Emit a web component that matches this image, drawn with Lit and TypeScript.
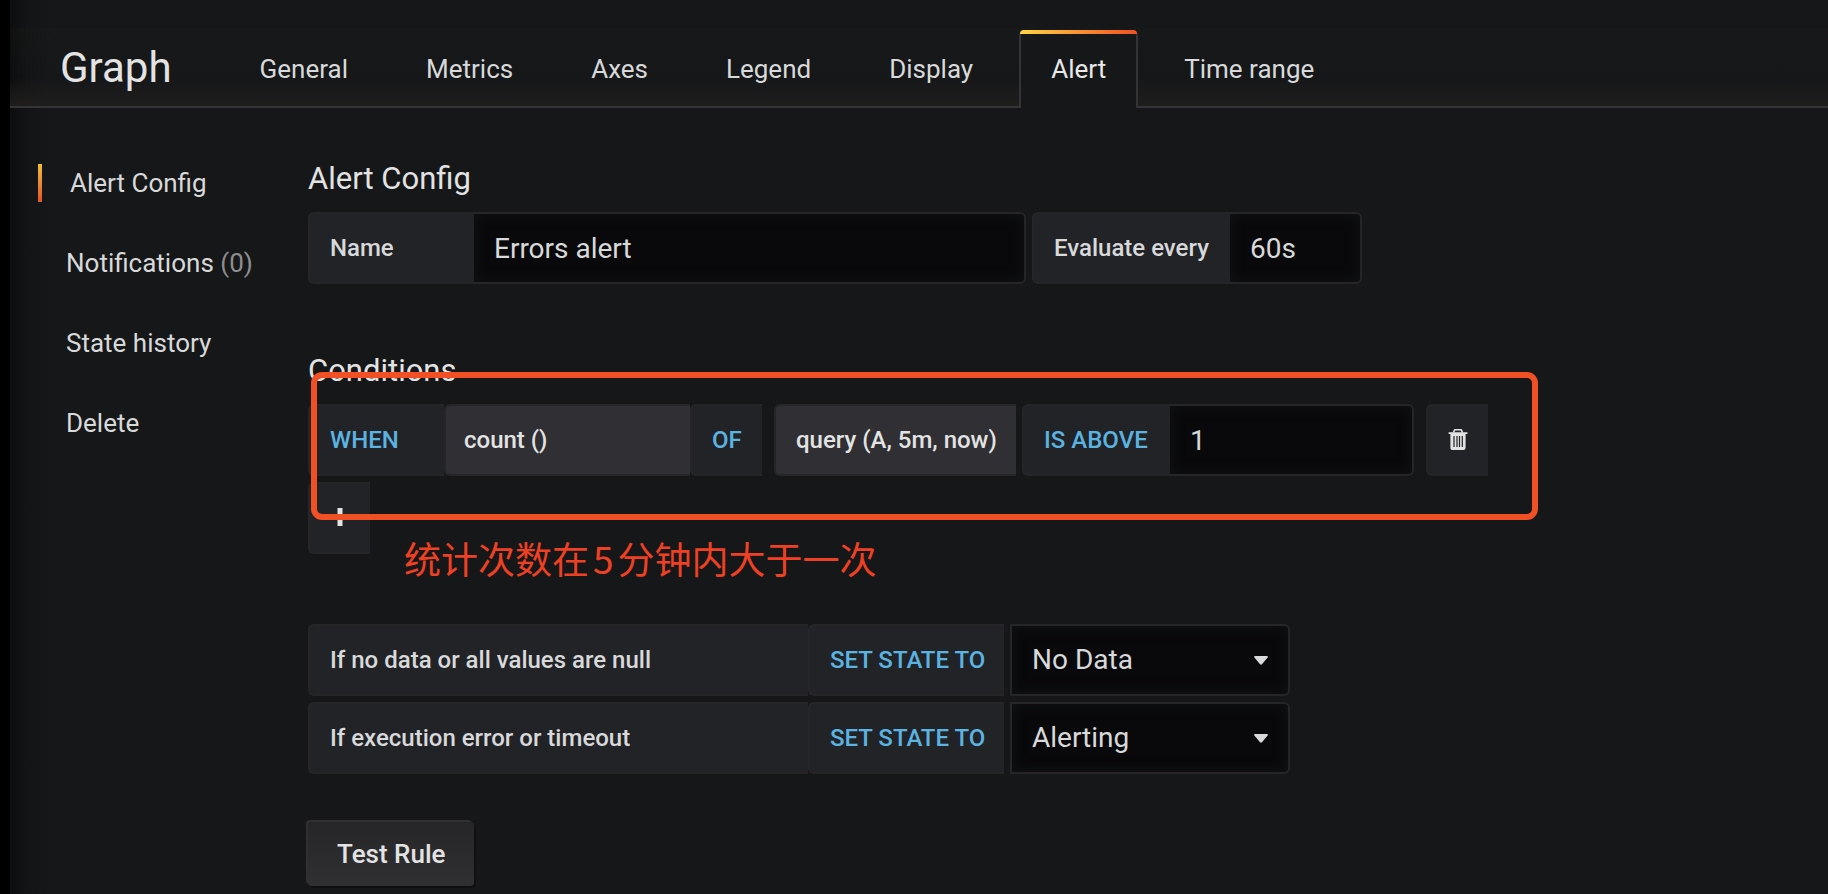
import { LitElement, html, css, svg } from "lit";
import { customElement, property, state } from "lit/decorators.js";
import { classMap } from "lit/directives/class-map.js";

interface StateRule {
  id: string;
  label: string;
  value: string;
  options: string[];
}

const STATES = ["Alerting", "No Data", "Keep Last State", "Ok"];

@customElement("editor-tabs")
class EditorTabs extends LitElement {
  @property() heading = "";
  @property({ type: Array }) tabs: string[] = [];
  @state() active = "Alert";

  static styles = css`
    :host {
      display: block;
    }
    .header {
      display: flex;
      align-items: stretch;
      margin-top: 28px;
      padding: 2px 0 0 50px;
      border-bottom: 2px solid #333435;
      background: linear-gradient(180deg, rgba(34, 32, 30, 0.15), rgba(22, 23, 25, 0) 50px, #1f1e1d);
    }
    .title {
      margin: 0 56px 0 0;
      font-size: 42px;
      font-weight: 400;
      line-height: 76px;
      color: #e3e3e3;
    }
    .tabs {
      display: flex;
      gap: 14px;
      margin-bottom: -2px;
    }
    .tab {
      display: block;
      border: 2px solid transparent;
      border-bottom: 0;
      border-radius: 6px 6px 0 0;
      padding: 17px 30px 19px;
      font-size: 26px;
      line-height: 40px;
      color: #d8d9da;
      text-decoration: none;
      white-space: nowrap;
      position: relative;
    }
    .active {
      border-color: #333435;
      background: #161719;
      color: #e8e8e8;
    }
    .active::before {
      content: "";
      position: absolute;
      top: -2px;
      left: -1px;
      right: -1px;
      height: 4px;
      border-radius: 6px 6px 0 0;
      background: linear-gradient(90deg, #ffd443, #f05023);
    }
  `;

  render() {
    return html`
      <header class="header">
        <h1 class="title">${this.heading}</h1>
        <nav class="tabs">
          ${this.tabs.map(
            (t) => html`<a
              href="#"
              class=${classMap({ tab: true, active: t === this.active })}
              @click=${(e: Event) => {
                e.preventDefault();
                this.active = t;
              }}
              >${t}</a
            >`
          )}
        </nav>
      </header>
    `;
  }
}

@customElement("app-root")
class AppRoot extends LitElement {
  @state() rules: StateRule[] = [
    { id: "nodata", label: "If no data or all values are null", value: "No Data", options: STATES },
    { id: "exec", label: "If execution error or timeout", value: "Alerting", options: STATES },
  ];

  static styles = css`
    :host {
      display: block;
      font-family: Roboto, "Noto Sans CJK SC", sans-serif;
      color: #d8d9da;
    }
    * {
      box-sizing: border-box;
    }
    .page {
      display: flow-root;
      min-height: 100vh;
      border-left: 10px solid #000;
      background: linear-gradient(90deg, #0c0d0e, #131415 16px, #161719 40px) #161719;
    }
    .body {
      display: flex;
      align-items: flex-start;
    }
    .side {
      display: flex;
      flex-direction: column;
      flex: none;
      gap: 42px;
      width: 298px;
      padding: 56px 0 0 28px;
    }
    .side-link {
      border-left: 4px solid transparent;
      padding-left: 24px;
      font-size: 26px;
      line-height: 38px;
      color: #d8d9da;
      text-decoration: none;
    }
    .current {
      padding-left: 28px;
      border-image: linear-gradient(180deg, #efc23c, #e35127) 1;
    }
    .muted {
      color: #8e8e8e;
    }
    .form {
      flex: 1;
      min-width: 0;
      padding: 54px 0 8px;
    }
    .group {
      position: relative;
      margin-bottom: 70px;
    }
    .last {
      margin-bottom: 48px;
    }
    .heading {
      margin: 0 0 16px;
      font-size: 31px;
      line-height: 34px;
      font-weight: 400;
      color: #e3e3e3;
    }
    .row {
      display: flex;
      margin-bottom: 6px;
    }
    .field {
      display: flex;
      margin-right: 6px;
    }
    .wide-gap {
      margin-right: 12px;
    }
    .cell {
      display: block;
      height: 72px;
      margin: 0;
      padding: 0 18px 0 20px;
      border: 2px solid #262628;
      border-right: 0;
      border-radius: 6px 0 0 6px;
      background: #222327;
      font: 500 24px/68px Roboto, sans-serif;
      color: #d8d9da;
      text-align: left;
      white-space: nowrap;
    }
    .keyword {
      color: #5ab3e1;
    }
    .part {
      background: #2f2f34;
      color: #e3e3e3;
    }
    .w-label {
      width: 166px;
    }
    .w-every {
      width: 198px;
    }
    .w-when {
      width: 136px;
    }
    .w-reducer {
      width: 246px;
      padding-left: 18px;
    }
    .w-of {
      width: 72px;
    }
    .w-query {
      width: 242px;
    }
    .w-is {
      width: 148px;
    }
    .w-rule {
      width: 500px;
    }
    .w-set {
      width: 196px;
    }
    .icon-cell {
      display: grid;
      place-items: center;
      width: 62px;
      padding: 0;
      color: #e3e3e3;
    }
    .control {
      height: 72px;
      margin: 0;
      padding: 0 20px;
      border: 2px solid #262628;
      border-left-width: 0;
      border-radius: 0 6px 6px 0;
      background: #09090b;
      box-shadow: inset 0 0 12px 2px #111214;
      font: 400 28px/68px Roboto, sans-serif;
      color: #d8d9da;
      outline: none;
      appearance: none;
    }
    .w-name {
      width: 552px;
    }
    .w-freq {
      width: 132px;
    }
    .w-value {
      width: 244px;
    }
    .select {
      display: grid;
      align-items: center;
      width: 280px;
    }
    .select > * {
      grid-area: 1 / 1;
    }
    .select .control {
      border-left-width: 2px;
      width: 100%;
    }
    .caret {
      justify-self: end;
      margin-right: 22px;
      pointer-events: none;
    }
    .test {
      display: block;
      height: 64px;
      margin: 0;
      padding: 0 29px;
      border: 0;
      border-radius: 4px;
      background: linear-gradient(180deg, #262628, #303032);
      box-shadow: -2px -2px 0 0 #303032, 2px 2px 0 0 #101012;
      font: 500 26px/64px Roboto, sans-serif;
      color: #e3e3e3;
    }
    .marker {
      position: absolute;
      top: 18px;
      left: 3px;
      width: 1227px;
      height: 148px;
      border: 6px solid #f05023;
      border-radius: 11px;
      pointer-events: none;
    }
    .note {
      position: absolute;
      top: 180px;
      left: 96px;
      margin: 0;
      font: 400 37px/48px "Noto Sans CJK SC", sans-serif;
      color: #ee4023;
      white-space: nowrap;
    }
    .digit {
      margin: 0 4px;
    }
  `;

  private trash = svg`<svg width="20" height="22" viewBox="0 0 20 22" aria-hidden="true">
    <path d="M5.500 3.500 6.500 1.200Q6.800.7 7.400.7h5.200q.6 0 .9.500l1 2.300" fill="none" stroke="currentColor" stroke-width="1.600"/>
    <path d="M.6 3.200h18.800v1.900h-1.800v13.300q0 2.600-2.300 2.600H4.700q-2.300 0-2.300-2.600V5.100H.6z" fill="currentColor"/>
    <path d="M6 7v11M9 7v11M11.500 7v11M14.300 7v11" stroke="#222327" stroke-width="1.200"/>
  </svg>`;

  render() {
    return html`
      <div class="page">
        <editor-tabs
          heading="Graph"
          .tabs=${["General", "Metrics", "Axes", "Legend", "Display", "Alert", "Time range"]}
        ></editor-tabs>
        <div class="body">
          <nav class="side">
            <a class="side-link current" href="#config">Alert Config</a>
            <a class="side-link" href="#notifications">Notifications <span class="muted">(0)</span></a>
            <a class="side-link" href="#history">State history</a>
            <a class="side-link" href="#delete">Delete</a>
          </nav>
          <main class="form">
            <section class="group">
              <h2 class="heading">Alert Config</h2>
              <div class="row">
                <div class="field">
                  <label class="cell w-label" for="name">Name</label>
                  <input class="control w-name" id="name" type="text" .value=${"Errors alert"} />
                </div>
                <div class="field">
                  <label class="cell w-every" for="freq">Evaluate every</label>
                  <input class="control w-freq" id="freq" type="text" .value=${"60s"} />
                </div>
              </div>
            </section>

            <section class="group">
              <h2 class="heading">Conditions</h2>
              <div class="row">
                <div class="field wide-gap">
                  <span class="cell keyword w-when">WHEN</span>
                  <button class="cell part w-reducer" type="button">count ()</button>
                  <span class="cell keyword w-of">OF</span>
                </div>
                <div class="field">
                  <button class="cell part w-query" type="button">query (A, 5m, now)</button>
                </div>
                <div class="field wide-gap">
                  <label class="cell keyword w-is" for="threshold">IS ABOVE</label>
                  <input class="control w-value" id="threshold" type="text" .value=${"1"} />
                </div>
                <button class="cell icon-cell" type="button" aria-label="Remove condition">${this.trash}</button>
              </div>
              <div class="row">
                <button class="cell icon-cell" type="button" aria-label="Add condition">
                  <svg width="18" height="20" viewBox="0 0 18 20" aria-hidden="true">
                    <path d="M9 0v18M0 9h18" stroke="currentColor" stroke-width="5" />
                  </svg>
                </button>
              </div>
              <div class="marker"></div>
              <p class="note">统计次数在<span class="digit">5</span>分钟内大于一次</p>
            </section>

            <section class="group last">
              ${this.rules.map(
                (r) => html`<div class="row">
                  <label class="cell w-rule" for=${r.id}>${r.label}</label>
                  <div class="field">
                    <label class="cell keyword w-set" for=${r.id}>SET STATE TO</label>
                  </div>
                  <div class="select">
                    <select class="control" id=${r.id}>
                      ${r.options.map((o) => html`<option ?selected=${o === r.value}>${o}</option>`)}
                    </select>
                    <svg class="caret" width="14" height="9" viewBox="0 0 14 9" aria-hidden="true">
                      <path d="M1 0h12q1.400.4.600 1.500L8 8.300q-1 .9-2 0L.4 1.500Q-.4.4 1 0z" fill="#d8d9da" />
                    </svg>
                  </div>
                </div>`
              )}
            </section>
            <button class="test" type="button">Test Rule</button>
          </main>
        </div>
      </div>
    `;
  }
}
